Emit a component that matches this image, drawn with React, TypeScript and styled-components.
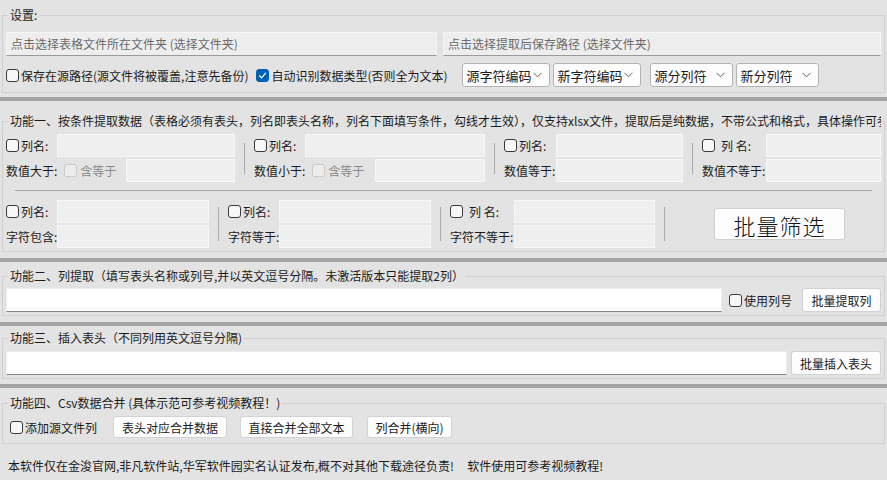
import styled, { createGlobalStyle } from "styled-components";

const GlobalStyle = createGlobalStyle`
  * { box-sizing: border-box; }
  html, body {
    margin: 0;
    padding: 0;
    background: #e3e3e3;
    overflow: hidden;
  }
  body {
    font-family: "Noto Sans CJK SC", "Noto Sans", sans-serif;
    font-size: 12px;
    color: #1b1b1b;
  }
`;

const Window = styled.div`
  width: 887px;
  height: 480px;
  display: flex;
  flex-direction: column;
`;

const Group = styled.fieldset<{ $top: number; $bottom: number }>`
  margin: ${(p) => p.$top}px 2px 0;
  padding: 0 3px ${(p) => p.$bottom}px;
  border: 1px solid #d0d0d0;
  min-width: 0;
`;

const Legend = styled.legend`
  margin-left: 2px;
  padding: 0 2px;
  line-height: 16px;
  white-space: nowrap;
  max-width: calc(100% - 2px);
  overflow: hidden;
`;

const Divider = styled.div<{ $top: number }>`
  height: 4px;
  margin-top: ${(p) => p.$top}px;
  background: #a3a3a3;
  flex: none;
`;

/* ---------- settings ---------- */

const PathRow = styled.div`
  display: grid;
  grid-template-columns: 431px 1fr;
  gap: 6px;
  margin-top: 9px;
`;

const PathBox = styled.div`
  height: 24px;
  padding: 0 4px;
  line-height: 22px;
  color: #6a6a6a;
  background: #eeeeee;
  border: 1px solid #f5f5f5;
  border-bottom-color: #9a9a9a;
  white-space: nowrap;
`;

const OptionRow = styled.div`
  display: flex;
  align-items: center;
  height: 24px;
  margin-top: 7px;
`;

const CheckLabel = styled.label<{ $ml?: number; $gap?: number }>`
  display: flex;
  align-items: center;
  gap: ${(p) => p.$gap ?? 2}px;
  margin-left: ${(p) => p.$ml ?? 0}px;
  white-space: nowrap;
  flex: none;
`;

const Box = styled.span<{ $checked?: boolean; $disabled?: boolean }>`
  width: 13px;
  height: 13px;
  border-radius: 3px;
  flex: none;
  display: flex;
  align-items: center;
  justify-content: center;
  border: 1px solid
    ${(p) => (p.$checked ? "#005fb8" : p.$disabled ? "#cacaca" : "#3a3a3a")};
  background: ${(p) =>
    p.$checked ? "#005fb8" : p.$disabled ? "#ececec" : "#f7f7f7"};
`;

const SelectBox = styled.div<{ $w: number; $ml: number }>`
  width: ${(p) => p.$w}px;
  height: 24px;
  margin-left: ${(p) => p.$ml}px;
  padding: 0 7px 0 4px;
  display: flex;
  align-items: center;
  justify-content: space-between;
  font-size: 13px;
  background: #fdfdfd;
  border: 1px solid #b4b4b4;
  border-radius: 3px;
  flex: none;
`;

/* ---------- function one ---------- */

const FilterRow = styled.div<{ $top: number }>`
  display: flex;
  align-items: center;
  margin-top: ${(p) => p.$top}px;
`;

const Cell = styled.div<{ $w: number }>`
  width: ${(p) => p.$w}px;
  display: flex;
  flex-direction: column;
  gap: 2px;
  flex: none;
`;

const Line = styled.div`
  display: flex;
  align-items: center;
  height: 23px;
`;

const Lbl = styled.div<{ $w: number }>`
  width: ${(p) => p.$w}px;
  display: flex;
  align-items: center;
  white-space: nowrap;
  flex: none;
`;

const Muted = styled.span`
  color: #8a8a8a;
`;

const Field = styled.div`
  flex: 1;
  height: 23px;
  background: #efefef;
  border: 1px solid #f7f7f7;
`;

const VSep = styled.div<{ $h: number }>`
  width: 1px;
  height: ${(p) => p.$h}px;
  margin: 0 9px;
  background: #ababab;
  flex: none;
`;

const HLine = styled.div`
  height: 1px;
  margin: 8px 9px 0 9px;
  background: #a8a8a8;
`;

const ButtonArea = styled.div`
  flex: 1;
  display: flex;
  justify-content: center;
  padding-left: 4px;
`;

const BigButton = styled.button`
  width: 131px;
  height: 32px;
  font-family: "Noto Sans CJK SC", sans-serif;
  font-size: 22px;
  font-weight: 300;
  letter-spacing: 1px;
  color: #111;
  background: #fdfdfd;
  border: 1px solid #cfcfcf;
  border-radius: 3px;
  padding: 0;
`;

/* ---------- functions two to four ---------- */

const InputRow = styled.div<{ $top: number }>`
  display: flex;
  align-items: center;
  margin-top: ${(p) => p.$top}px;
`;

const TextInput = styled.div`
  flex: 1;
  height: 24px;
  background: #ffffff;
  border: 1px solid #ececec;
  border-bottom-color: #858585;
`;

const Button = styled.button<{ $w: number; $ml: number; $h?: number }>`
  width: ${(p) => p.$w}px;
  height: ${(p) => p.$h ?? 24}px;
  margin-left: ${(p) => p.$ml}px;
  padding: 0;
  font-family: "Noto Sans CJK SC", sans-serif;
  font-size: 12px;
  color: #1b1b1b;
  background: #fdfdfd;
  border: 1px solid #d2d2d2;
  border-radius: 3px;
  flex: none;
`;

const Footer = styled.div`
  margin-top: 14px;
  padding-left: 8px;
  line-height: 16px;
  white-space: pre;
`;

function Check({ checked, disabled }: { checked?: boolean; disabled?: boolean }) {
  return (
    <Box $checked={checked} $disabled={disabled}>
      {checked && (
        <svg width="9" height="9" viewBox="0 0 9 9">
          <polyline
            points="1.5,4.8 3.6,6.8 7.6,2.2"
            fill="none"
            stroke="#fff"
            strokeWidth="1.2"
            strokeLinecap="round"
            strokeLinejoin="round"
          />
        </svg>
      )}
    </Box>
  );
}

function Select({ text, w, ml }: { text: string; w: number; ml: number }) {
  return (
    <SelectBox $w={w} $ml={ml}>
      <span>{text}</span>
      <svg width="9" height="6" viewBox="0 0 9 6">
        <polyline points="0.5,0.8 4.5,4.8 8.5,0.8" fill="none" stroke="#606060" strokeWidth="1" />
      </svg>
    </SelectBox>
  );
}

function Condition({
  w,
  lw,
  name,
  label,
  withEq,
  eqWidth,
}: {
  w: number;
  lw: number;
  name: string;
  label: string;
  withEq?: boolean;
  eqWidth?: number;
}) {
  return (
    <Cell $w={w}>
      <Line>
        <Lbl $w={lw}>
          <CheckLabel $gap={name.includes(" ") ? 6 : 2}>
            <Check />
            {name}
          </CheckLabel>
        </Lbl>
        <Field />
      </Line>
      <Line>
        <Lbl $w={eqWidth ?? lw}>
          {label}
          {withEq && (
            <CheckLabel $ml={7} $gap={3}>
              <Check disabled />
              <Muted>含等于</Muted>
            </CheckLabel>
          )}
        </Lbl>
        <Field />
      </Line>
    </Cell>
  );
}

export default function App() {
  return (
    <Window>
      <GlobalStyle />
      <Group $top={7} $bottom={5}>
        <Legend>设置:</Legend>
        <PathRow>
          <PathBox>点击选择表格文件所在文件夹 (选择文件夹)</PathBox>
          <PathBox>点击选择提取后保存路径 (选择文件夹)</PathBox>
        </PathRow>
        <OptionRow>
          <CheckLabel>
            <Check />
            保存在源路径(源文件将被覆盖,注意先备份)
          </CheckLabel>
          <CheckLabel $ml={8}>
            <Check checked />
            自动识别数据类型(否则全为文本)
          </CheckLabel>
          <Select text="源字符编码" w={88} ml={14} />
          <Select text="新字符编码" w={88} ml={3} />
          <Select text="源分列符" w={83} ml={9} />
          <Select text="新分列符" w={83} ml={3} />
        </OptionRow>
      </Group>
      <Divider $top={4} />

      <Group $top={12} $bottom={3}>
        <Legend>
          功能一、按条件提取数据（表格必须有表头，列名即表头名称，列名下面填写条件，勾线才生效），仅支持xlsx文件，提取后是纯数据，不带公式和格式，具体操作可参考视频教程！
        </Legend>
        <FilterRow $top={5}>
          <Condition w={229} lw={51} name="列名:" label="数值大于:" withEq eqWidth={120} />
          <VSep $h={31} />
          <Condition w={231} lw={51} name="列名:" label="数值小于:" withEq eqWidth={121} />
          <VSep $h={31} />
          <Condition w={179} lw={52} name="列名:" label="数值等于:" />
          <VSep $h={31} />
          <Condition w={179} lw={64} name="列 名:" label="数值不等于:" />
        </FilterRow>
        <HLine />
        <FilterRow $top={9}>
          <Condition w={203} lw={51} name="列名:" label="字符包含:" />
          <VSep $h={34} />
          <Condition w={203} lw={51} name="列名:" label="字符等于:" />
          <VSep $h={34} />
          <Condition w={205} lw={64} name="列 名:" label="字符不等于:" />
          <VSep $h={34} />
          <ButtonArea>
            <BigButton>批量筛选</BigButton>
          </ButtonArea>
        </FilterRow>
      </Group>
      <Divider $top={6} />

      <Group $top={6} $bottom={3}>
        <Legend>功能二、列提取（填写表头名称或列号,并以英文逗号分隔。未激活版本只能提取2列）</Legend>
        <InputRow $top={4}>
          <TextInput />
          <CheckLabel $ml={7}>
            <Check />
            使用列号
          </CheckLabel>
          <Button $w={79} $ml={10}>
            批量提取列
          </Button>
        </InputRow>
      </Group>
      <Divider $top={6} />

      <Group $top={4} $bottom={3}>
        <Legend>功能三、插入表头（不同列用英文逗号分隔)</Legend>
        <InputRow $top={5}>
          <TextInput />
          <Button $w={90} $ml={4}>
            批量插入表头
          </Button>
        </InputRow>
      </Group>
      <Divider $top={5} />

      <Group $top={7} $bottom={5}>
        <Legend>功能四、Csv数据合并 (具体示范可参考视频教程！)</Legend>
        <InputRow $top={5}>
          <CheckLabel $ml={4}>
            <Check />
            添加源文件列
          </CheckLabel>
          <Button $w={114} $ml={16} $h={22}>
            表头对应合并数据
          </Button>
          <Button $w={113} $ml={13} $h={22}>
            直接合并全部文本
          </Button>
          <Button $w={85} $ml={14} $h={22}>
            列合并(横向)
          </Button>
        </InputRow>
      </Group>

      <Footer>
        {"本软件仅在金浚官网,非凡软件站,华军软件园实名认证发布,概不对其他下载途径负责!     软件使用可参考视频教程!"}
      </Footer>
    </Window>
  );
}
